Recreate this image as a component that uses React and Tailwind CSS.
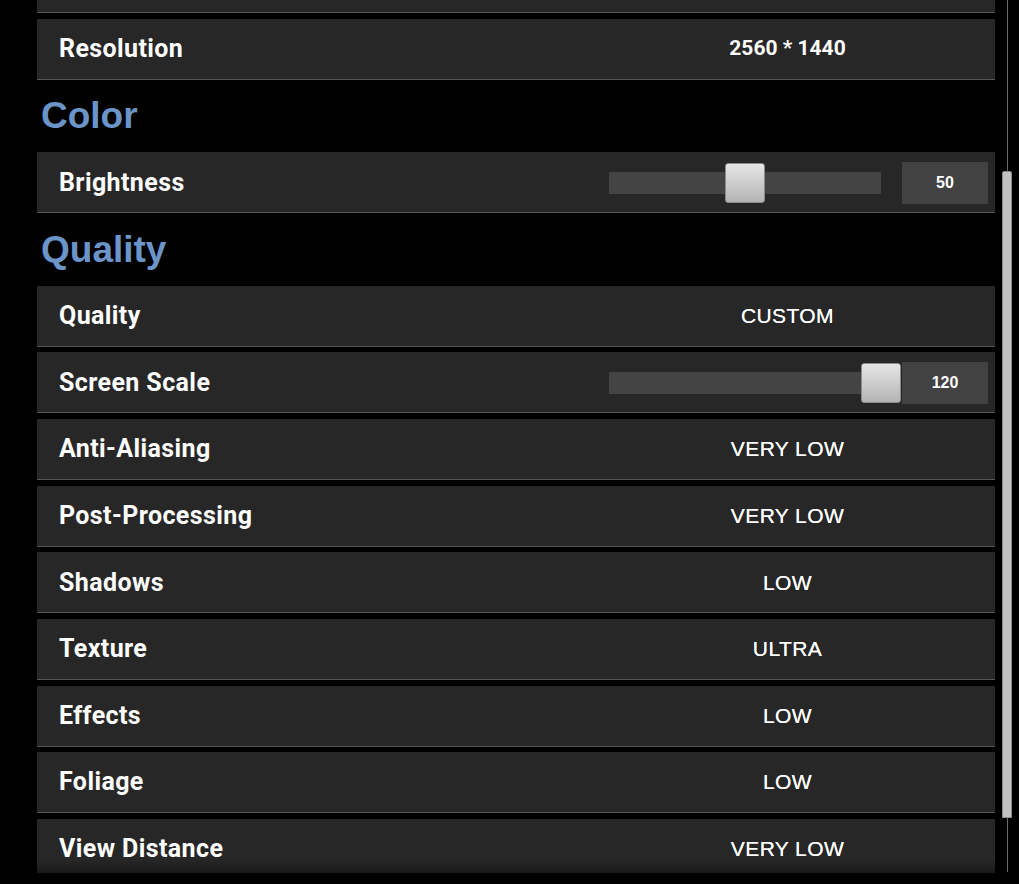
import React from 'react';

const items = [
  { type: 'row', label: '', value: '' },
  { type: 'row', label: 'Resolution', value: '2560 * 1440', numeric: true },
  { type: 'header', label: 'Color' },
  { type: 'slider', label: 'Brightness', value: 50, max: 100 },
  { type: 'header', label: 'Quality' },
  { type: 'row', label: 'Quality', value: 'CUSTOM' },
  { type: 'slider', label: 'Screen Scale', value: 120, min: 50, max: 120 },
  { type: 'row', label: 'Anti-Aliasing', value: 'VERY LOW' },
  { type: 'row', label: 'Post-Processing', value: 'VERY LOW' },
  { type: 'row', label: 'Shadows', value: 'LOW' },
  { type: 'row', label: 'Texture', value: 'ULTRA' },
  { type: 'row', label: 'Effects', value: 'LOW' },
  { type: 'row', label: 'Foliage', value: 'LOW' },
  { type: 'row', label: 'View Distance', value: 'VERY LOW' },
];

function Slider({ value, min = 0, max }) {
  const pct = ((value - min) / (max - min)) * 100;
  return (
    <div className="flex items-center w-full pl-[29px] pr-[7px] pt-px">
      <div className="relative h-[22px] w-[272px] bg-[#444444]">
        <div
          className="absolute top-[-9px] h-[40px] w-[40px] rounded-[3px] border border-[#8a8a8a] bg-gradient-to-b from-[#e6e6e6] to-[#b4b4b4]"
          style={{ left: `calc(${pct}% - 20px)` }}
        />
      </div>
      <div className="ml-[21px] h-[42px] w-[86px] bg-[#424242] flex items-center justify-center text-white font-bold text-[16px] font-['Liberation_Sans',Arial,sans-serif]">
        {value}
      </div>
    </div>
  );
}

function Row({ item }) {
  return (
    <div className="h-[61px] shrink-0 flex items-center bg-[#272727] border-b border-[#555555]">
      <div className="flex-1 pl-[22px] text-white text-[25px] font-bold font-['Roboto',sans-serif] tracking-[0.4px]">
        {item.label}
      </div>
      <div className="w-[415px] h-full flex items-center justify-center">
        {item.type === 'slider' ? (
          <Slider value={item.value} min={item.min} max={item.max} />
        ) : item.numeric ? (
          <span className="text-white text-[21px] font-bold font-['Roboto',sans-serif]">{item.value}</span>
        ) : (
          <span className="text-white text-[21px] tracking-[0.4px] font-['Liberation_Sans',Arial,sans-serif] [text-shadow:0_0_0.4px_#fff]">{item.value}</span>
        )}
      </div>
    </div>
  );
}

export default function App() {
  return (
    <div className="w-full h-[884px] bg-black overflow-hidden flex">
      <div className="relative ml-[37px] w-[958px] h-[873px] overflow-hidden">
        <div className="flex flex-col gap-[5.67px] mt-[-47.67px]">
          {items.map((item, i) =>
            item.type === 'header' ? (
              <div key={i} className="h-[61px] shrink-0 flex items-center pl-[4px] text-[37px] font-bold text-[#6b95c9] font-['Liberation_Sans',Arial,sans-serif]">
                {item.label}
              </div>
            ) : (
              <Row key={i} item={item} />
            )
          )}
        </div>
        <div className="absolute bottom-0 left-0 right-0 h-[14px] bg-gradient-to-b from-transparent to-[#1a1a1a]" />
      </div>

      <div className="ml-[7px] w-[10px] h-[872px] flex flex-col items-center">
        <div className="w-px h-[171px] bg-[#6a6a6a]" />
        <div className="w-[10px] h-[647px] bg-[#c2c2c2] border border-[#8c8c8c] rounded-t-[2px]" />
        <div className="w-px flex-1 bg-[#6a6a6a]" />
      </div>
    </div>
  );
}
